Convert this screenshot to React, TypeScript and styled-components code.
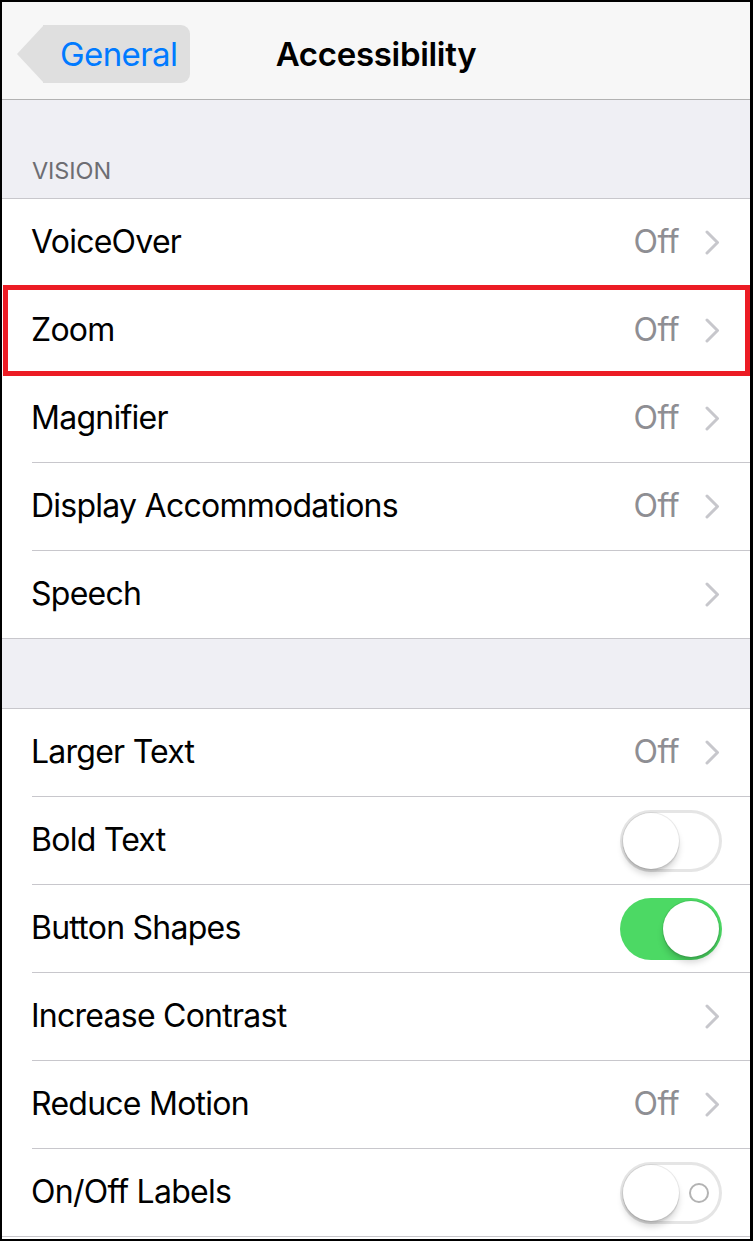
import React from "react";
import styled, { createGlobalStyle } from "styled-components";

const Global = createGlobalStyle`
  html, body { margin: 0; padding: 0; background: #000; }
  body { font-family: Inter, "Noto Sans", "Liberation Sans", sans-serif; -webkit-font-smoothing: antialiased; }
  * { box-sizing: border-box; }
`;

const Frame = styled.div`
  width: 753px;
  height: 1241px;
  border-style: solid;
  border-color: #000;
  border-width: 2px 3px 2px 2px;
  background: #fff;
  display: flex;
  flex-direction: column;
  overflow: hidden;
`;

const NavBar = styled.header`
  height: 98px;
  flex: none;
  background: #f7f7f7;
  border-bottom: 1px solid #b2b2b2;
  display: grid;
  grid-template-columns: 1fr auto 1fr;
  align-items: center;
`;

const BackButton = styled.button`
  justify-self: start;
  position: relative;
  margin-left: 41px;
  margin-top: 6px;
  height: 58px;
  padding: 0 13px 0 17px;
  border: none;
  background: #dfdfdf;
  border-radius: 0 9px 9px 0;
  color: #007aff;
  font-family: inherit;
  font-size: 33px;
  letter-spacing: -0.6px;
  display: flex;
  align-items: center;
  &::before {
    content: "";
    position: absolute;
    left: -26px;
    top: 0;
    width: 0;
    height: 0;
    border-top: 29px solid transparent;
    border-bottom: 29px solid transparent;
    border-right: 27px solid #dfdfdf;
  }
`;

const Title = styled.h1`
  margin: 6px 0 0;
  font-size: 33px;
  font-weight: 600;
  letter-spacing: -0.3px;
  color: #000;
`;

const SectionGap = styled.div<{ $h: number }>`
  flex: none;
  height: ${(p) => p.$h}px;
  background: #efeff4;
  border-bottom: 1px solid #c8c7cc;
  display: flex;
  align-items: flex-end;
  padding: 0 0 13px 30px;
`;

const SectionTitle = styled.span`
  font-size: 23.5px;
  color: #6d6d72;
  letter-spacing: -0.1px;
`;

const Group = styled.div`
  flex: none;
  background: #fff;
`;

const Row = styled.div<{ $last?: boolean; $highlight?: boolean }>`
  position: relative;
  height: 88px;
  display: flex;
  align-items: center;
  padding: 0 30px 0 29px;
  &::before {
    content: "";
    position: absolute;
    bottom: 0;
    right: 0;
    left: ${(p) => (p.$last ? 0 : 30)}px;
    height: 1px;
    background: #c8c7cc;
  }
  ${(p) =>
    p.$highlight &&
    `
    &::after {
      content: "";
      position: absolute;
      top: -2px;
      bottom: -1px;
      left: 1px;
      right: 0px;
      border: 5px solid #ec1c24;
      pointer-events: none;
    }
  `}
`;

const Label = styled.span`
  flex: 1;
  font-size: 32px;
  color: #000;
  letter-spacing: -0.75px;
  padding-bottom: 4px;
`;

const Value = styled.span`
  font-size: 32px;
  color: #8e8e93;
  letter-spacing: -0.5px;
  margin-right: 26px;
  padding-bottom: 4px;
`;

const Chevron = () => (
  <svg width="15" height="25" viewBox="0 0 15 25" style={{ marginBottom: 2 }}>
    <path d="M2 2 L12.5 12.5 L2 23" fill="none" stroke="#c7c7cc" strokeWidth="3" strokeLinecap="round" strokeLinejoin="round" />
  </svg>
);

const Track = styled.div<{ $on?: boolean }>`
  position: relative;
  width: 102px;
  height: 62px;
  border-radius: 31px;
  margin-right: -2px;
  background: ${(p) => (p.$on ? "#4cd964" : "#fff")};
  box-shadow: ${(p) => (p.$on ? "none" : "inset 0 0 0 3px #e5e5e5")};
  display: flex;
  align-items: center;
  justify-content: ${(p) => (p.$on ? "flex-end" : "flex-start")};
  padding: 0 3px;
`;

const Knob = styled.div`
  width: 56px;
  height: 56px;
  border-radius: 50%;
  background: #fff;
  box-shadow: 0 6px 6px rgba(0, 0, 0, 0.15), 0 0 0 1px rgba(0, 0, 0, 0.08), 0 3px 1px rgba(0, 0, 0, 0.06);
`;

const OffRing = styled.div`
  position: absolute;
  right: 13px;
  top: 50%;
  width: 20px;
  height: 20px;
  margin-top: -10px;
  border-radius: 50%;
  border: 2px solid #b3b3b3;
`;

const Switch = ({ on, labels }: { on?: boolean; labels?: boolean }) => (
  <Track $on={on}>
    <Knob />
    {labels && !on && <OffRing />}
  </Track>
);

type Item = { label: string; value?: string; kind: "nav" | "switch"; on?: boolean; labels?: boolean; highlight?: boolean };

const vision: Item[] = [
  { label: "VoiceOver", value: "Off", kind: "nav" },
  { label: "Zoom", value: "Off", kind: "nav", highlight: true },
  { label: "Magnifier", value: "Off", kind: "nav" },
  { label: "Display Accommodations", value: "Off", kind: "nav" },
  { label: "Speech", kind: "nav" },
];

const second: Item[] = [
  { label: "Larger Text", value: "Off", kind: "nav" },
  { label: "Bold Text", kind: "switch", on: false },
  { label: "Button Shapes", kind: "switch", on: true },
  { label: "Increase Contrast", kind: "nav" },
  { label: "Reduce Motion", value: "Off", kind: "nav" },
  { label: "On/Off Labels", kind: "switch", on: false, labels: true },
];

const renderGroup = (items: Item[]) => (
  <Group>
    {items.map((it, i) => (
      <Row key={it.label} $last={i === items.length - 1} $highlight={it.highlight}>
        <Label>{it.label}</Label>
        {it.kind === "nav" ? (
          <>
            {it.value && <Value>{it.value}</Value>}
            <Chevron />
          </>
        ) : (
          <Switch on={it.on} labels={it.labels} />
        )}
      </Row>
    ))}
  </Group>
);

export default function App() {
  return (
    <>
      <Global />
      <Frame>
        <NavBar>
          <BackButton>General</BackButton>
          <Title>Accessibility</Title>
          <span />
        </NavBar>
        <SectionGap $h={99}>
          <SectionTitle>VISION</SectionTitle>
        </SectionGap>
        {renderGroup(vision)}
        <SectionGap $h={70} />
        {renderGroup(second)}
      </Frame>
    </>
  );
}
